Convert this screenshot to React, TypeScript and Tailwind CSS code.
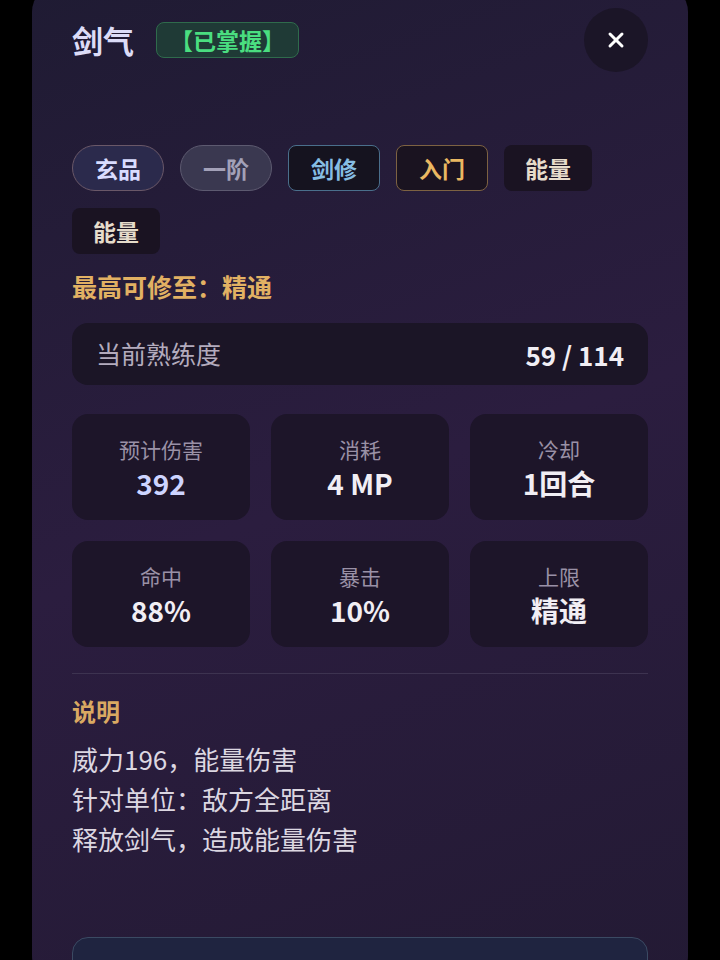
import { X } from "lucide-react";

const font = { fontFamily: '"Noto Sans CJK SC", "Noto Sans", sans-serif' };

const tags = [
  { label: "玄品", cls: "rounded-full border border-[#6a5868] bg-[#2b2a4c] px-[22px] text-[#d9dcff]" },
  { label: "一阶", cls: "rounded-full border border-[#5d5a70] bg-[#3a3850] px-[22px] text-[#a3a1b8]" },
  { label: "剑修", cls: "rounded-lg border border-[#4a6f8c] bg-[#15131f] px-[22px] text-[#86bde3]" },
  { label: "入门", cls: "rounded-lg border border-[#7d6242] bg-[#1a1320] px-[22px] text-[#eab862]" },
  { label: "能量", cls: "rounded-lg bg-[#1a1322] px-[21px] text-[#e6dccb]" },
  { label: "能量", cls: "rounded-lg bg-[#1a1322] px-[21px] text-[#e6dccb]" },
];

const stats = [
  { label: "预计伤害", value: "392", hl: true },
  { label: "消耗", value: "4 MP" },
  { label: "冷却", value: "1回合" },
  { label: "命中", value: "88%" },
  { label: "暴击", value: "10%" },
  { label: "上限", value: "精通" },
];

const App = () => {
  return (
    <div className="h-[960px] w-[720px] overflow-hidden bg-black" style={font}>
      <div className="mx-8 -mt-4 h-[1000px] rounded-[28px] bg-linear-160 from-[#1f1b33] via-[#2b1d3f] to-[#231a34] px-10 pt-6">
        {/* header */}
        <div className="flex h-16 items-center justify-between">
          <div className="flex items-center gap-[22px]">
            <h1 className="text-[31px] font-bold text-[#dcdcf7]">剑气</h1>
            <span className="flex h-9 items-center rounded-lg border border-[#2f6b4c] bg-[#1f3a36] px-[13px] text-[23px] font-bold text-[#4ade80]">
              【已掌握】
            </span>
          </div>
          <button className="flex h-16 w-16 items-center justify-center rounded-full bg-[#1b1527] text-white">
            <X size={24} strokeWidth={3} />
          </button>
        </div>

        {/* tags */}
        <div className="mt-[73px] flex flex-wrap gap-x-4 gap-y-[17px]">
          {tags.map((t, i) => (
            <span
              key={i}
              className={`flex h-[46px] items-center text-[23px] font-bold ${t.cls}`}
            >
              {t.label}
            </span>
          ))}
        </div>

        <p className="mt-[17px] text-[25px] font-bold leading-[30px] text-[#e2b163]">最高可修至：精通</p>

        <div className="mt-[22px] flex h-[62px] items-center justify-between rounded-2xl bg-[#1b1526] px-6">
          <span className="text-[25px] text-[#b3abbd]">当前熟练度</span>
          <span className="text-[26px] font-bold text-[#f1eef4]">59 / 114</span>
        </div>

        {/* stats */}
        <div className="mt-[29px] grid grid-cols-3 gap-[21px]">
          {stats.map((s) => (
            <div
              key={s.label}
              className="flex h-[106px] flex-col items-center justify-center gap-[4px] rounded-2xl bg-[#1d1529]"
            >
              <span className="text-[21px] leading-7 text-[#9a91a6]">{s.label}</span>
              <span
                className={`text-[28px] font-bold leading-8 ${s.hl ? "text-[#cdd4ff]" : "text-[#f1eef4]"}`}
              >
                {s.value}
              </span>
            </div>
          ))}
        </div>

        <div className="mt-[26px] h-px bg-[#3d3350]" />

        <h2 className="mt-[22px] text-[24px] font-bold leading-[30px] text-[#d9a962]">说明</h2>
        <div className="mt-[13px] text-[26px] leading-10 text-[#dcd7e1]">
          <p>威力196，能量伤害</p>
          <p>针对单位：敌方全距离</p>
          <p>释放剑气，造成能量伤害</p>
        </div>

        <div className="mt-[78px] h-[80px] rounded-2xl border border-[#3b4a63] bg-[#1f2440]" />
      </div>
    </div>
  );
};

export default App;
